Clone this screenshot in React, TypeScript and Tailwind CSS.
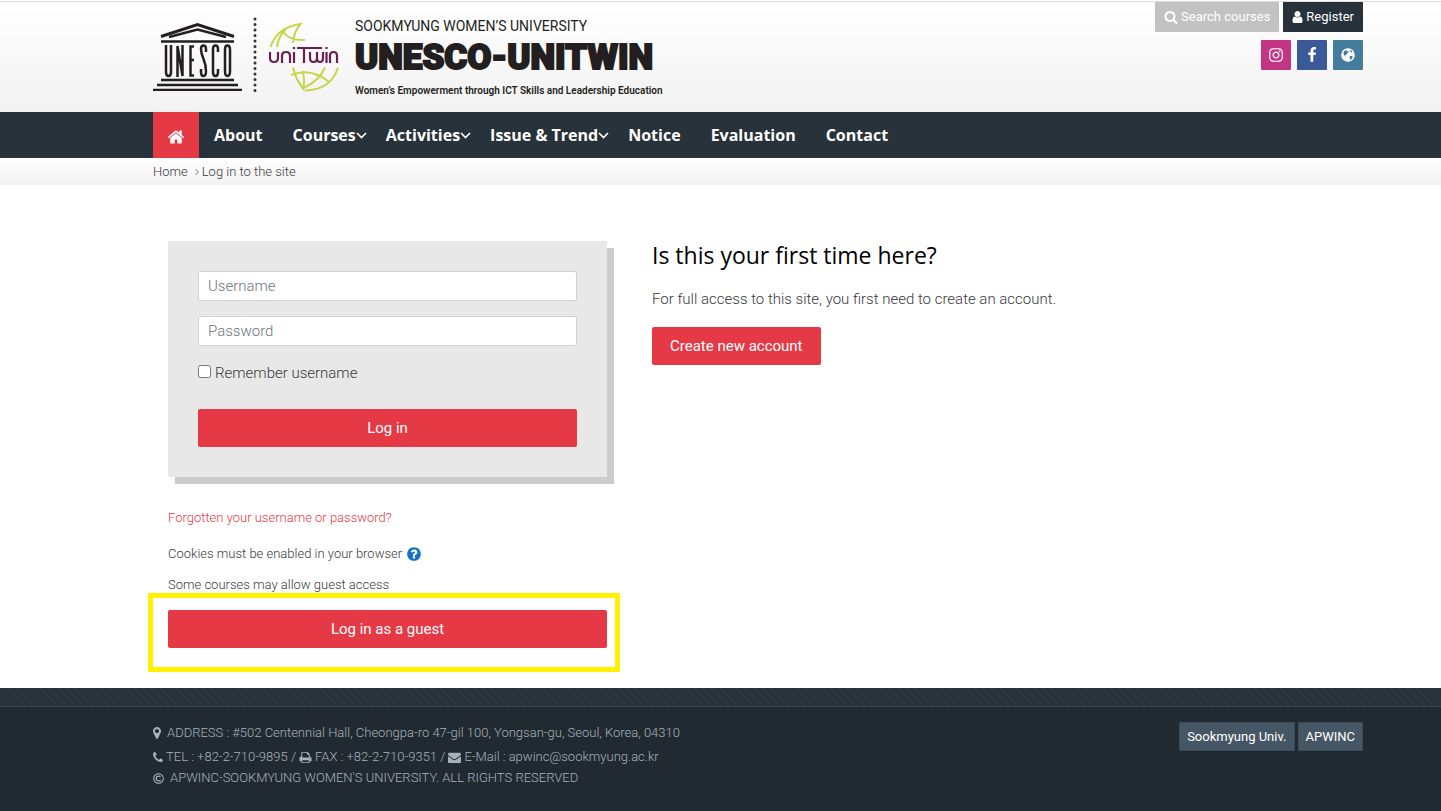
import type { ReactNode } from "react";
import { FaRegCopyright } from "react-icons/fa";

const icons = {
    search: "M1216 832q0-185-131.5-316.5t-316.5-131.5-316.5 131.5-131.5 316.5 131.5 316.5 316.5 131.5 316.5-131.5 131.5-316.5zm512 832q0 52-38 90t-90 38q-54 0-90-38l-343-342q-179 124-399 124-143 0-273.5-55.5t-225-150-150-225-55.5-273.5 55.5-273.5 150-225 225-150 273.5-55.5 273.5 55.5 225 150 150 225 55.5 273.5q0 220-124 399l343 343q37 37 37 90z",
    user: "M1536 1399q0 109-62.5 187t-150.5 78h-854q-88 0-150.5-78t-62.5-187q0-85 8.5-160.5t31.5-152 58.5-131 94-89 134.5-34.5q131 128 313 128t313-128q76 0 134.5 34.5t94 89 58.5 131 31.5 152 8.5 160.5zm-256-887q0 159-112.5 271.5t-271.5 112.5-271.5-112.5-112.5-271.5 112.5-271.5 271.5-112.5 271.5 112.5 112.5 271.5z",
    home: "M1472 992v480q0 26-19 45t-45 19h-384v-384h-256v384h-384q-26 0-45-19t-19-45v-480q0-1 .5-3t.5-3l575-474 575 474q1 2 1 6zm223-69l-62 74q-8 9-21 11h-3q-13 0-21-7l-692-577-692 577q-12 8-24 7-13-2-21-11l-62-74q-8-10-7-23.5t11-21.5l719-599q32-26 76-26t76 26l244 204v-195q0-14 9-23t23-9h192q14 0 23 9t9 23v408l219 182q10 8 11 21.5t-7 23.5z",
    facebook: "M1343 12v264h-157q-86 0-116 36t-30 108v189h293l-39 296h-254v759h-306v-759h-255v-296h255v-218q0-186 104-288.5t277-102.5q147 0 228 12z",
    instagram: "M1152 896q0-106-75-181t-181-75-181 75-75 181 75 181 181 75 181-75 75-181zm138 0q0 164-115 279t-279 115-279-115-115-279 115-279 279-115 279 115 115 279zm108-410q0 38-27 65t-65 27-65-27-27-65 27-65 65-27 65 27 27 65zm-502-220q-7 0-76.5-.5t-105.5 0-96.5 3-103 10-71.5 18.5q-50 20-88 58t-58 88q-11 29-18.5 71.5t-10 103-3 96.5 0 105.5.5 76.5-.5 76.5 0 105.5 3 96.5 10 103 18.5 71.5q20 50 58 88t88 58q29 11 71.5 18.5t103 10 96.5 3 105.5 0 76.5-.5 76.5.5 105.5 0 96.5-3 103-10 71.5-18.5q50-20 88-58t58-88q11-29 18.5-71.5t10-103 3-96.5 0-105.5-.5-76.5.5-76.5 0-105.5-3-96.5-10-103-18.5-71.5q-20-50-58-88t-88-58q-29-11-71.5-18.5t-103-10-96.5-3-105.5 0-76.5.5zm768 630q0 229-5 317-10 208-124 322t-322 124q-88 5-317 5t-317-5q-208-10-322-124t-124-322q-5-88-5-317t5-317q10-208 124-322t322-124q88-5 317-5t317 5q208 10 322 124t124 322q5 88 5 317z",
    marker: "M1152 640q0-106-75-181t-181-75-181 75-75 181 75 181 181 75 181-75 75-181zm256 0q0 109-33 179l-364 774q-16 33-47.5 52t-67.5 19-67.5-19-46.5-52l-365-774q-33-70-33-179 0-212 150-362t362-150 362 150 150 362z",
    phone: "M1600 1240q0 27-10 70.5t-21 68.5q-21 50-122 106-94 51-186 51-27 0-52.5-3.5t-57.5-12.5-47.5-14.5-55.5-20.5-49-18q-98-35-175-83-128-79-264.5-215.5t-215.5-264.5q-48-77-83-175-3-9-18-49t-20.5-55.5-14.5-47.5-12.5-57.5-3.5-52.5q0-92 51-186 56-101 106-122 25-11 68.5-21t70.5-10q14 0 21 3 18 6 53 76 11 19 30 54t35 63.5 31 53.5q3 4 17.5 25t21.5 35.5 7 28.5q0 20-28.5 50t-62 55-62 53-28.5 46q0 9 5 22.5t8.5 20.5 14 24 11.5 19q76 137 174 235t235 174q2 1 19 11.5t24 14 20.5 8.5 22.5 5q18 0 46-28.5t53-62 55-62 50-28.5q14 0 28.5 7t35.5 21.5 25 17.5q25 15 53.5 31t63.5 35 54 30q70 35 76 53 3 7 3 21z",
    print: "M448 1536h896v-256h-896v256zm0-640h896v-384h-160q-40 0-68-28t-28-68v-160h-640v640zm1152 64q0-26-19-45t-45-19-45 19-19 45 19 45 45 19 45-19 19-45zm128 0v416q0 13-9.5 22.5t-22.5 9.5h-224v160q0 40-28 68t-68 28h-960q-40 0-68-28t-28-68v-160h-224q-13 0-22.5-9.5t-9.5-22.5v-416q0-79 56.5-135.5t135.5-56.5h64v-544q0-40 28-68t68-28h672q40 0 88 20t76 48l152 152q28 28 48 76t20 88v256h64q79 0 135.5 56.5t56.5 135.5z",
    envelope: "M1792 710v794q0 66-47 113t-113 47h-1472q-66 0-113-47t-47-113v-794q44 49 101 87 362 246 497 345 57 42 92.5 65.5t94.5 48 110 24.5h2q51 0 110-24.5t94.5-48 92.5-65.5q170-123 498-345 57-39 100-87zm0-294q0 79-49 151t-122 123q-376 261-468 325-10 7-42.5 31t-54 38.5-52 32.5-57.5 27-50 9h-2q-23 0-50-9t-57.5-27-52-32.5-54-38.5-42.5-31q-91-64-262-182.5t-205-142.5q-62-42-117-115.5t-55-136.5q0-78 41.5-130t118.5-52h1472q65 0 112.5 47t47.5 113z",
    question: "M1024 1376v-192q0-14-9-23t-23-9h-192q-14 0-23 9t-9 23v192q0 14 9 23t23 9h192q14 0 23-9t9-23zm256-672q0-88-55.5-163t-138.5-116-170-41q-243 0-371 213-15 24 8 42l132 100q7 6 19 6 16 0 25-12 53-68 86-92 34-24 86-24 48 0 85.5 26t37.5 59q0 38-20 61t-68 45q-63 28-115.5 86.5t-52.5 125.5v36q0 14 9 23t23 9h192q14 0 23-9t9-23q0-19 21.5-49.5t54.5-49.5q32-18 49-28.5t46-35 44.5-48 28-60.5 12.5-81zm384 192q0 209-103 385.5t-279.5 279.5-385.5 103-385.5-103-279.5-279.5-103-385.5 103-385.5 279.5-279.5 385.5-103 385.5 103 279.5 279.5 103 385.5z",
};

function Icon({ name, className, viewBox = "0 0 1792 1792" }: { name: keyof typeof icons; className?: string; viewBox?: string }) {
    return (
        <svg viewBox={viewBox} fill="currentColor" aria-hidden="true" className={className}>
            <path d={icons[name]} />
        </svg>
    );
}

function Globe() {
    return (
        <svg viewBox="0 0 14 14" aria-hidden="true" className="size-[14px]">
            <circle cx="7" cy="7" r="6.8" fill="#fff" />
            <path d="M3 3.200 4.600 2.200l1 .3.6.7 1-.3.400 1.300-1.200.8-.5 1.200-.9.3.2.8-1-.4-.3.800 1 .5-.6.400L3 7 2.400 5.200zM8.800 8.200l1.200-.4 1.700 1-.4 1.300-1.200 1.300-1.100.4.1-1.500-.7-1zM8.800 1.900l1.600.7 1.200 1.600-.8.3-.7-.6-.9.5.2-1.200z" fill="#457b9d" />
        </svg>
    );
}

function UnescoMark() {
    return (
        <svg viewBox="0 0 90 72" role="img" aria-label="UNESCO" className="h-[72px] w-[90px]" fill="none" stroke="#231f20">
            <path d="M8 17.500 44.500 5.500 81 17.500" strokeWidth="3" />
            <path d="M16 18 44.500 10.500 73 18" strokeWidth="2.500" />
            <path d="M8 22.500h73M8 61h73M4 66h81M0 71h89" strokeWidth="2.600" />
            <g strokeWidth="2.500">
                <path d="M13 26v27q0 4 2.500 4t2.500-4V26" />
                <path d="M24.500 58V27l5 30V26" />
                <path d="M41 27.500h-3.500v29H41M37.500 41H41" />
                <path d="M53 33v-3q0-3.500-2.500-3.500T48 30q0 4 2.500 10t2.500 12q0 5-2.500 5T48 53v-3" />
                <path d="M65 33v-3q0-3.500-2.500-3.500T60 30v23q0 4 2.500 4t2.500-4v-3" />
                <path d="M72 30.500q0-4 2.500-4t2.500 4V52q0 5-2.500 5T72 52z" />
            </g>
        </svg>
    );
}

function UnitwinMark() {
    return (
        <svg viewBox="0 0 72 74" role="img" aria-label="uniTwin" className="h-[74px] w-[72px]" fill="none">
            <g stroke="#c5d64b" strokeWidth="2">
                <path d="M1.500 28Q8 8 31.500 5Q25 12 24 24M8 28Q9 18 17 10M14 13q7 9 22 8" />
                <path d="M24 48.500Q27 61 34.500 70Q36 61 34 52M56 48.500Q50 62 34.500 69M22 56Q42 48 60 63M69 48.500Q62 71 36 71.500" />
            </g>
            <g stroke="#6b1f50" strokeWidth="2.200">
                <path d="M1 33v6q0 4 4 4t4-4v-6M13 44v-7q0-4 4-4t4 4v7M25 33v11M25 28v2M28 29h25M35 29v15M41 33v6q0 4 3.500 4t3.500-4v-6 6q0 4 3 4t3-4v-6M57.500 33v11M57.500 28v2M61 44v-7q0-4 3.500-4t3.500 4v7" />
            </g>
        </svg>
    );
}

const navItems = [
    { label: "About" },
    { label: "Courses", menu: true },
    { label: "Activities", menu: true },
    { label: "Issue & Trend", menu: true },
    { label: "Notice" },
    { label: "Evaluation" },
    { label: "Contact" },
];

function Container({ className = "", children }: { className?: string; children: ReactNode }) {
    return <div className={`pr-[78px] pl-[153px] ${className}`}>{children}</div>;
}

function Header() {
    return (
        <header className="border-t border-[#ddd] bg-linear-to-b from-white to-[#f2f2f2]">
            <Container className="flex h-[110px] justify-between">
                <a href="#" className="flex pt-[15px] text-[#231f20]">
                    <div className="pt-[2px]"><UnescoMark /></div>
                    <svg viewBox="0 0 4 76" aria-hidden="true" className="ml-[10px] h-[76px] w-1">
                        <path d="M2 2v73" stroke="#333" strokeWidth="3" strokeLinecap="round" strokeDasharray="0 5.500" />
                    </svg>
                    <div className="ml-3 pt-[2px]"><UnitwinMark /></div>
                    <div className="ml-[14px] flex flex-col font-[Roboto,sans-serif] whitespace-nowrap">
                        <span className="text-sm leading-[18px]">SOOKMYUNG WOMEN’S UNIVERSITY</span>
                        <span className="text-[35px] leading-[46px] font-black [-webkit-text-stroke:2px_#231f20]">UNESCO-UNITWIN</span>
                        <span className="text-[10px] leading-[20px] font-semibold">Women’s Empowerment through ICT Skills and Leadership Education</span>
                    </div>
                </a>
                <div className="flex flex-col items-end gap-2">
                    <div className="flex gap-1 text-[13px] text-white">
                        <a href="#" className="flex h-[30px] items-center gap-[3px] bg-[#c2c2c2] px-[9px]">
                            <Icon name="search" className="size-[14px]" />Search courses
                        </a>
                        <a href="#" className="flex h-[30px] items-center gap-[3px] bg-[#27323a] px-[9px]">
                            <Icon name="user" viewBox="256 0 1280 1792" className="h-[14px] w-[11px]" />Register
                        </a>
                    </div>
                    <div className="flex gap-[6px] text-white">
                        <a href="#" aria-label="Instagram" className="flex size-[30px] items-center justify-center rounded-[1px] bg-[#c13584]">
                            <Icon name="instagram" className="size-4" />
                        </a>
                        <a href="#" aria-label="Facebook" className="flex size-[30px] items-center justify-center rounded-[1px] bg-[#3b5998]">
                            <Icon name="facebook" className="size-4" />
                        </a>
                        <a href="#" aria-label="Website" className="flex size-[30px] items-center justify-center rounded-[1px] bg-[#457b9d]">
                            <Globe />
                        </a>
                    </div>
                </div>
            </Container>
        </header>
    );
}

function Nav() {
    return (
        <nav className="bg-[#28323a] text-white">
            <Container className="flex h-[46px]">
                <a href="#" aria-label="Home" className="flex w-[46px] items-center justify-center bg-[#e63946] pt-[3px]">
                    <Icon name="home" className="size-[18px]" />
                </a>
                {navItems.map(item => (
                    <a key={item.label} href="#" className={`flex items-center font-['Trebuchet_MS','Open_Sans',sans-serif] text-base font-bold whitespace-nowrap ${item.menu ? "pr-1 pl-[15px]" : "px-[15px]"}`}>
                        {item.label}
                        {item.menu && (
                            <svg viewBox="0 0 11 7" fill="none" stroke="currentColor" strokeWidth="1.600" aria-hidden="true" className="h-[7px] w-[11px]">
                                <path d="m1 1 4.500 4.500L10 1" />
                            </svg>
                        )}
                    </a>
                ))}
            </Container>
        </nav>
    );
}

function LoginForm() {
    const input = "block h-[30px] w-full rounded-[2px] border border-[#d2d2d2] bg-white px-[9px] text-[15px] font-light text-[#495057] placeholder:text-[#6c757d]";
    return (
        <form className="bg-[#e8e8e8] p-[30px] shadow-[7px_7px_0_#ccc]" onSubmit={e => e.preventDefault()}>
            <input aria-label="Username" placeholder="Username" className={input} />
            <input aria-label="Password" type="password" placeholder="Password" className={`mt-[15px] ${input}`} />
            <label className="mt-4 flex items-center gap-1 text-[15px] leading-[22px] font-light">
                <input type="checkbox" className="-mt-[3px] size-[13px]" />
                Remember username
            </label>
            <button className="mt-[25px] h-[38px] w-full rounded-[2px] bg-[#e63946] text-[15px] font-normal text-white">Log in</button>
        </form>
    );
}

function Footer() {
    return (
        <footer className="flex-1 bg-[#222a31] text-[13px] font-light text-[#a5b1bb]">
            <div className="h-[19px] border-b border-[#3b474f] bg-[repeating-linear-gradient(45deg,#28323a_0,#28323a_5px,#2e3941_5px,#2e3941_6px)]" />
            <Container className="flex justify-between pt-[14px] pb-6">
                <div>
                    <p className="flex h-6 items-center gap-[6px]">
                        <Icon name="marker" viewBox="384 0 1024 1792" className="h-[14px] w-2" />
                        ADDRESS : #502 Centennial Hall, Cheongpa-ro 47-gil 100, Yongsan-gu, Seoul, Korea, 04310
                    </p>
                    <p className="flex h-6 items-center gap-[3px]">
                        <Icon name="phone" viewBox="192 0 1408 1792" className="h-[13px] w-[10px]" />
                        TEL : +82-2-710-9895 /
                        <Icon name="print" className="size-[13px]" />
                        FAX : +82-2-710-9351 /
                        <Icon name="envelope" className="size-[13px]" />
                        E-Mail : apwinc@sookmyung.ac.kr
                    </p>
                    <p className="flex h-[18px] items-center gap-[6px]">
                        <FaRegCopyright className="size-[11px]" />
                        APWINC-SOOKMYUNG WOMEN'S UNIVERSITY. ALL RIGHTS RESERVED
                    </p>
                </div>
                <div className="flex items-start gap-[3px] pt-px font-normal text-white">
                    <a href="#" className="rounded-[1px] border border-[#3b4c59] bg-[#455764] px-[7px] py-[4px] leading-[19px]">Sookmyung Univ.</a>
                    <a href="#" className="rounded-[1px] border border-[#3b4c59] bg-[#455764] px-[7px] py-[4px] leading-[19px]">APWINC</a>
                </div>
            </Container>
        </footer>
    );
}

export default function App() {
    return (
        <div className="flex min-h-screen flex-col bg-white pt-px font-[Roboto,sans-serif] text-[#373a3c]">
            <Header />
            <Nav />
            <div className="bg-linear-to-b from-white to-[#f2f2f2] text-[13px] font-light">
                <Container className="flex h-[27px] items-center">
                    <a href="#">Home</a>
                    <svg viewBox="0 0 4 8" fill="none" stroke="#777" aria-hidden="true" className="mr-[3px] ml-[7px] h-2 w-1">
                        <path d="m.5 1 3 3-3 3" />
                    </svg>
                    <span>Log in to the site</span>
                </Container>
            </div>
            <main>
                <Container className="flex pt-14 pb-10">
                    <section className="w-2/5 pr-[30px] pl-[15px] text-[13px] leading-5 font-light">
                        <LoginForm />
                        <a href="#" className="mt-[31px] block text-[#e63946]">Forgotten your username or password?</a>
                        <p className="mt-4 flex items-center gap-1">
                            Cookies must be enabled in your browser
                            <button aria-label="Help with cookies"><Icon name="question" className="size-4 text-[#1672c4]" /></button>
                        </p>
                        <p className="mt-[11px]">Some courses may allow guest access</p>
                        <div className="relative mt-[15px]">
                            <button className="h-[38px] w-full rounded-[2px] bg-[#e63946] text-[15px] font-normal text-white">Log in as a guest</button>
                            <div className="pointer-events-none absolute -top-[17px] -right-[13px] -bottom-6 -left-5 border-5 border-[#fff200]" />
                        </div>
                    </section>
                    <section className="w-3/5 pl-[15px]">
                        <h2 className="font-['Trebuchet_MS','Open_Sans',sans-serif] text-[23px] leading-7 text-black">Is this your first time here?</h2>
                        <p className="mt-[18px] text-[15px] leading-6 font-light">For full access to this site, you first need to create an account.</p>
                        <button className="mt-4 h-[38px] rounded-[2px] bg-[#e63946] px-[18px] text-[15px] text-white">Create new account</button>
                    </section>
                </Container>
            </main>
            <Footer />
        </div>
    );
}
